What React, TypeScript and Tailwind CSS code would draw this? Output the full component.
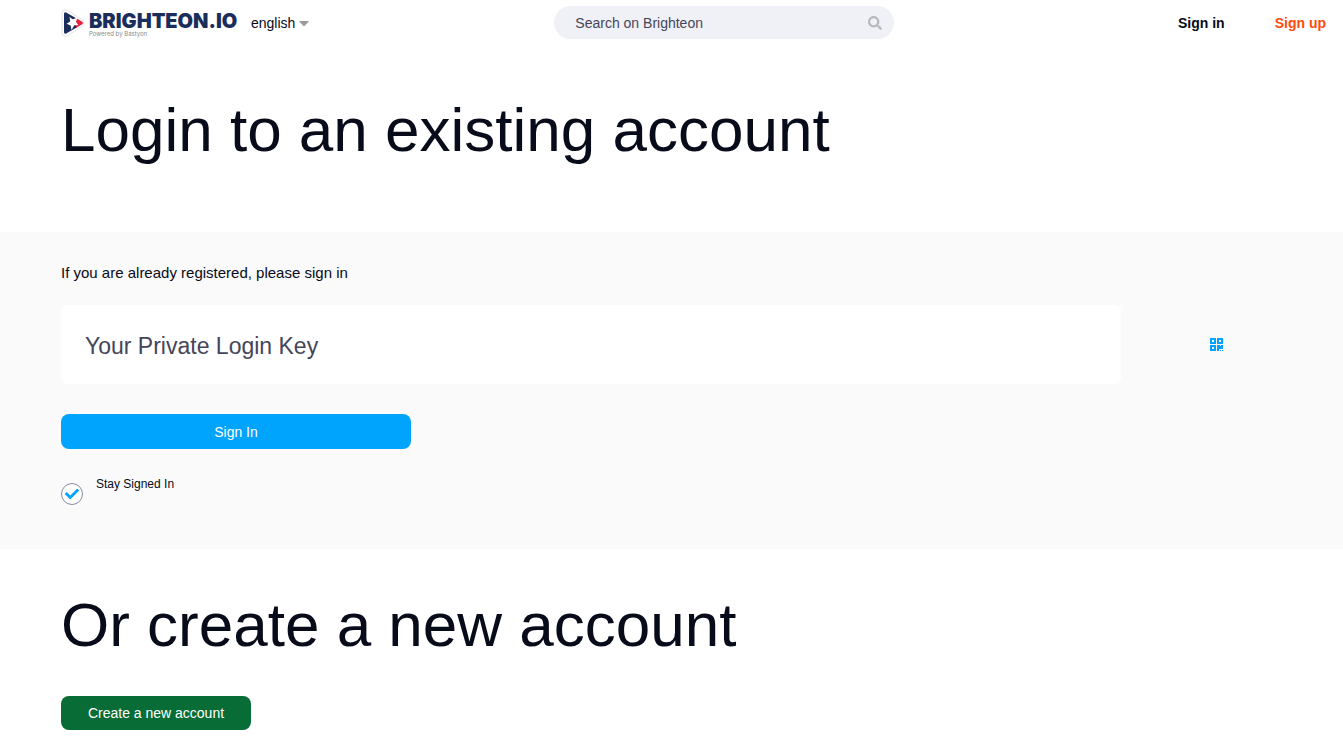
import { FaSearch, FaCheck, FaCaretDown } from "react-icons/fa";

function PlayMark() {
  return (
    <svg viewBox="0 0 24 28" className="h-[28px] w-[24px] shrink-0" aria-hidden="true">
      <path
        d="M4 1h2L21.500 11q3 3 0 6L6 27H4q-3 0-3-3V4q0-3 3-3Z"
        fill="#fff"
        stroke="#e3e3e8"
        strokeWidth="1"
      />
      <path d="M3 5q0-2.500 2.200-1.500L16 9.800V18.200L5.200 24.500Q3 25.500 3 23Z" fill="#1b2d5b" />
      <path d="M15 9 21.500 13q1 1 0 2L15 19Z" fill="#e8203c" />
      <path
        d="m8.500 8 3.200 2.300L16.300 8.800 15 12.800 17.300 16.200 13.300 16.200 10.500 21 9.600 16.400 5.600 14.800 9.200 12.600Z"
        fill="#fff"
      />
    </svg>
  );
}

function QrIcon() {
  return (
    <svg viewBox="0 0 14 14" className="h-[14px] w-[14px]" fill="#00a4fc" fillRule="evenodd" aria-hidden="true">
      <path d="M1 0h6v6H1ZM3 2v2h2V2Z" />
      <path d="M8 0h6v6H8ZM10 2v2h2V2Z" />
      <path d="M1 7h6v6H1ZM3 9v2h2V9Z" />
      <path d="M8 7h6v4h-4v2H8ZM11 7v1h1V7Z" />
      <path d="M11 12h1v1h-1ZM13 12h1v1h-1Z" />
    </svg>
  );
}

function Header() {
  return (
    <header className="grid h-[45px] grid-cols-[8fr_340px_7fr] items-center pr-[17px] pl-[61px] text-sm">
      <div className="flex items-center">
        <a href="#home" className="flex items-center gap-1">
          <PlayMark />
          <span className="flex w-[150px] flex-col pt-[6px] whitespace-nowrap">
            <span className="font-[Inter,sans-serif] text-[20px] leading-[15px] font-black text-[#1b2d5b]">
              BRIGHTEON.IO
            </span>
            <span className="pt-px font-[Inter,sans-serif] text-[6px] leading-[8px] text-[#8a8a8a]">
              Powered by Bastyon
            </span>
          </span>
        </a>
        <button type="button" className="ml-3 flex items-center gap-1">
          english
          <FaCaretDown className="h-[16px] w-[10px] text-[#9a9aa2]" />
        </button>
      </div>

      <form role="search" className="flex h-[33px] items-center rounded-full bg-[#f0f1f6] pr-3 pl-[21px]">
        <input
          type="search"
          aria-label="Search on Brighteon"
          placeholder="Search on Brighteon"
          className="min-w-0 flex-1 bg-transparent text-sm outline-none placeholder:text-[#45455a]"
        />
        <button type="button" aria-label="Search" className="text-[#b9b9be]">
          <FaSearch className="h-[14px] w-[14px]" />
        </button>
      </form>

      <nav className="flex justify-end gap-[50px] font-bold">
        <a href="#signin">Sign in</a>
        <a href="#signup" className="text-[#ff4c0c]">
          Sign up
        </a>
      </nav>
    </header>
  );
}

export default function App() {
  return (
    <div className="bg-white font-['Liberation_Sans',Arial,sans-serif] text-[#080b19]">
      <Header />

      <main>
        <h1 className="px-[61px] pt-[49px] pb-[66px] text-[62px] leading-[72px]">Login to an existing account</h1>

        <section className="bg-[#fafafa] pt-8 pr-8 pb-11 pl-[61px]">
          <label htmlFor="login-key" className="block text-[15px] leading-[18px]">
            If you are already registered, please sign in
          </label>

          <div className="mt-[23px] flex items-center">
            <input
              id="login-key"
              type="password"
              placeholder="Your Private Login Key"
              className="h-[79px] min-w-0 flex-1 rounded-md bg-white px-6 pt-1 text-[23px] outline-none placeholder:text-[#45455a]"
            />
            <button type="button" aria-label="Scan QR code" className="flex w-[190px] justify-center">
              <QrIcon />
            </button>
          </div>

          <button
            type="button"
            className="mt-[30px] block h-[35px] w-[350px] rounded-lg bg-[#00a4fc] text-sm text-white"
          >
            Sign In
          </button>

          <label className="mt-[26px] flex gap-[13px] text-xs leading-[18px]">
            <span className="mt-2 grid h-[22px] w-[22px]">
              <input
                type="checkbox"
                defaultChecked
                className="peer col-start-1 row-start-1 appearance-none rounded-full border border-[#8a8a9e] bg-white"
              />
              <FaCheck className="pointer-events-none invisible col-start-1 row-start-1 h-[14px] w-[14px] place-self-center text-[#00a4fc] peer-checked:visible" />
            </span>
            Stay Signed In
          </label>
        </section>

        <section className="px-[61px] pt-10 pb-[15px]">
          <h2 className="text-[62px] leading-[72px]">Or create a new account</h2>
          <button
            type="button"
            className="mt-[35px] block h-[34px] w-[190px] rounded-lg bg-[#076c35] text-sm text-white"
          >
            Create a new account
          </button>
        </section>
      </main>
    </div>
  );
}
